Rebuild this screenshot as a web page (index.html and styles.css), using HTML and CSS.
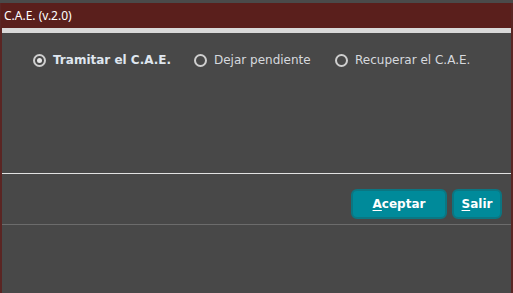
FILE: index.html
```html
<!DOCTYPE html>
<html lang="es">
<head>
<meta charset="utf-8">
<title>C.A.E. (v.2.0)</title>
<link rel="stylesheet" href="styles.css">
</head>
<body>
<div class="window">
  <div class="titlebar">C.A.E. (v.2.0)</div>
  <div class="strip"></div>
  <div class="content">
    <div class="options">
      <label class="opt checked"><span class="radio"></span><span>Tramitar el C.A.E.</span></label>
      <label class="opt"><span class="radio"></span><span>Dejar pendiente</span></label>
      <label class="opt"><span class="radio"></span><span>Recuperar el C.A.E.</span></label>
    </div>
    <div class="sep-light"></div>
    <div class="actions">
      <button class="btn btn-wide"><u>A</u>ceptar</button>
      <button class="btn btn-narrow"><u>S</u>alir</button>
    </div>
    <div class="sep-dark"></div>
  </div>
</div>
</body>
</html>
```

FILE: styles.css
```css
html, body {
  margin: 0;
  padding: 0;
  height: 100%;
  background: #4a4a4a;
  font-family: "DejaVu Sans", "Noto Sans", sans-serif;
}
.window {
  margin-top: 3px;
  height: calc(100% - 3px);
  border-left: 2px solid #5a2523;
  border-right: 2px solid #5a2523;
  box-sizing: border-box;
  display: flex;
  flex-direction: column;
}
.titlebar {
  height: 25px;
  background: #5a1f1c;
  color: #ffffff;
  font-family: "Noto Sans", "DejaVu Sans", sans-serif;
  font-size: 12px;
  line-height: 25px;
  padding-left: 3px;
  margin-left: -1px;
}
.strip {
  height: 5px;
  background: #d9d9d9;
}
.content {
  flex: 1;
  background: #484848;
  display: flex;
  flex-direction: column;
}
.options {
  display: flex;
  padding: 19px 0 0 31px;
  height: 140px;
  box-sizing: border-box;
}
.opt {
  display: flex;
  align-items: center;
  color: #d6d9de;
  font-size: 12px;
  line-height: 17px;
  height: 17px;
}
.opt:nth-child(1) { width: 161px; font-weight: bold; color: #dfe6ef; }
.opt:nth-child(2) { width: 141px; }
.radio {
  width: 9px;
  height: 9px;
  border: 2px solid #cfcfcf;
  border-radius: 50%;
  margin-right: 7px;
  position: relative;
  flex: none;
}
.checked .radio::after {
  content: "";
  position: absolute;
  left: 2px;
  top: 2px;
  width: 5px;
  height: 5px;
  border-radius: 50%;
  background: #e8e8e8;
}
.sep-light {
  height: 1px;
  background: #e2e2e2;
}
.actions {
  display: flex;
  justify-content: flex-end;
  gap: 5px;
  padding: 15px 9px 5px 0;
}
.btn {
  height: 30px;
  background: #008a9a;
  border: 2px solid #0b7682;
  border-radius: 6px;
  color: #ffffff;
  font-family: "DejaVu Sans", "Noto Sans", sans-serif;
  font-weight: bold;
  font-size: 12px;
  padding: 0;
  box-sizing: border-box;
}
.btn u { text-decoration-thickness: 1px; text-underline-offset: 2px; }
.btn-wide { width: 96px; }
.btn-narrow { width: 50px; }
.sep-dark {
  height: 1px;
  background: #6c6c6c;
}
```
